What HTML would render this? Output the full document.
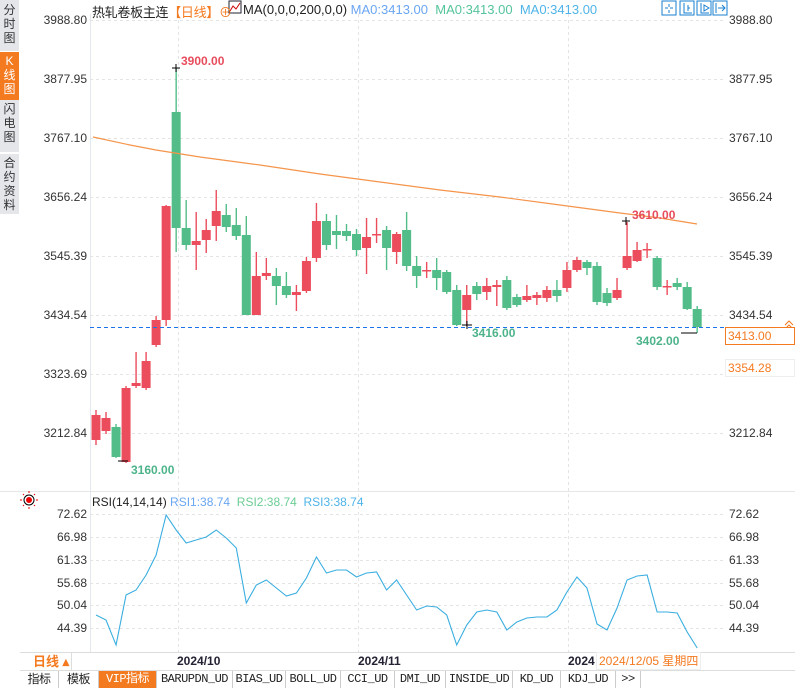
<!DOCTYPE html>
<html><head><meta charset="utf-8"><style>
body{margin:0;width:795px;height:688px;overflow:hidden;background:#fff;font-family:"Liberation Sans","Noto Sans CJK SC",sans-serif;position:relative}
.a{position:absolute;white-space:nowrap}
.side{position:absolute;left:0;width:19px;background:#e4e6ea;color:#333;font-size:12px;line-height:14px;text-align:center;border-bottom:1px solid #fff}
.lab{position:absolute;font-size:12px;color:#333;width:58px;text-align:right;left:29px}
.rl{position:absolute;left:729px;font-size:12px;color:#333}
.tab{position:absolute;top:671px;height:17px;font-size:12px;line-height:17px;text-align:center;border-right:1px solid #ccc;color:#222;font-family:"Liberation Mono","Noto Sans CJK SC",monospace;letter-spacing:-0.5px}
</style></head><body>
<div class="side" style="top:0;height:48px;padding-top:3px">分<br>时<br>图</div>
<div class="side" style="top:52px;height:46px;background:#f47a20;color:#fff;padding-top:2px">K<br>线<br>图</div>
<div class="side" style="top:100px;height:50px;padding-top:2px">闪<br>电<br>图</div>
<div class="side" style="top:154px;height:58px;padding-top:2px">合<br>约<br>资<br>料</div>

<svg class="a" style="left:0;top:0" width="795" height="688" id="s">
<line x1="90.5" y1="14" x2="90.5" y2="652" stroke="#e3e8ee"/>
<g stroke="#e4e4e4" stroke-dasharray="3,3">
<line x1="90" y1="20.5" x2="724" y2="20.5"/><line x1="90" y1="79.5" x2="724" y2="79.5"/><line x1="90" y1="138.5" x2="724" y2="138.5"/><line x1="90" y1="197.5" x2="724" y2="197.5"/><line x1="90" y1="256.5" x2="724" y2="256.5"/><line x1="90" y1="315.5" x2="724" y2="315.5"/><line x1="90" y1="374.5" x2="724" y2="374.5"/><line x1="90" y1="433.5" x2="724" y2="433.5"/>
<line x1="178.5" y1="14" x2="178.5" y2="652"/><line x1="358.5" y1="14" x2="358.5" y2="652"/><line x1="568.5" y1="14" x2="568.5" y2="652"/>
<line x1="90" y1="514.5" x2="724" y2="514.5"/><line x1="90" y1="537.5" x2="724" y2="537.5"/><line x1="90" y1="560.5" x2="724" y2="560.5"/><line x1="90" y1="583.5" x2="724" y2="583.5"/><line x1="90" y1="605.5" x2="724" y2="605.5"/><line x1="90" y1="628.5" x2="724" y2="628.5"/>
</g>
<line x1="0" y1="491.5" x2="795" y2="491.5" stroke="#e6e6e6"/>
<line x1="20" y1="652.5" x2="795" y2="652.5" stroke="#ddd"/>
<line x1="20" y1="670.5" x2="795" y2="670.5" stroke="#ddd"/>
<g id="c"></g>
<polyline fill="none" stroke="#f5944a" stroke-width="1.2" points="93,137 130,145 156,150 200,157 260,165 320,174 380,182 440,190 500,197 560,205 620,213 660,218 697,224"/>
<line x1="90" y1="327.5" x2="724" y2="327.5" stroke="#1a73e8" stroke-dasharray="4,3"/>
<polyline id="r" fill="none" stroke="#3aaee0" stroke-width="1.1"/>
<path d="M172 68h8M176 64v8M622 221h8M626 217v8M118 461h10M462 325h10M467 321v8M681 333h16" stroke="#000"/>
<path d="M785 325l4-4 4 4M785 329l4-4 4 4" stroke="#f47a20" fill="none"/>
<g fill="none" stroke="#1a7fd0">
<rect x="662" y="1" width="14" height="14"/><rect x="680" y="1" width="14" height="14"/><rect x="697" y="1" width="14" height="14"/><rect x="713" y="1" width="14" height="14"/>
<path d="M669 4v3M669 10v3M665 8h3M670 8h3M684 3v10h8M688 5v6M690 8h-2M701 3v10h8M704 5l5 3-5 3zM716 3v10M718 8h7M722 5l3 3-3 3"/>
</g>
<circle cx="29" cy="500" r="3" fill="#e00"/><circle cx="29" cy="500" r="5" fill="none" stroke="#000" stroke-width="1"/>
<path d="M22 500h-2M36 500h2M29 493v-2M29 507v2M24 495l-1-1M34 495l1-1M24 505l-1 1M34 505l1 1" stroke="#e00"/>
<rect x="229" y="1" width="12" height="12" fill="#fff" stroke="#223"/><path d="M230 11l3-5 3 3 4-6" stroke="#c00" fill="none"/>
</svg>

<div class="a" style="left:92px;top:2px;font-size:13px;color:#222;letter-spacing:-0.3px">热轧卷板主连<span style="color:#f47a20">【日线】⊕</span></div>
<div class="a" style="left:243px;top:2px;font-size:13px;color:#222">MA(0,0,0,200,0,0) <span style="color:#6aa6f2">MA0:3413.00</span> <span style="color:#54c49a">&nbsp;MA0:3413.00</span> <span style="color:#4fb4e8">&nbsp;MA0:3413.00</span></div>

<div class="lab" style="top:13px">3988.80</div><div class="lab" style="top:72px">3877.95</div><div class="lab" style="top:131px">3767.10</div><div class="lab" style="top:190px">3656.24</div><div class="lab" style="top:249px">3545.39</div><div class="lab" style="top:308px">3434.54</div><div class="lab" style="top:367px">3323.69</div><div class="lab" style="top:426px">3212.84</div>
<div class="rl" style="top:13px">3988.80</div><div class="rl" style="top:72px">3877.95</div><div class="rl" style="top:131px">3767.10</div><div class="rl" style="top:190px">3656.24</div><div class="rl" style="top:249px">3545.39</div><div class="rl" style="top:308px">3434.54</div><div class="rl" style="top:426px">3212.84</div>
<div class="a" style="left:725px;top:327px;width:66px;height:16px;border:1px solid #f47a20;color:#f47a20;font-size:12px;line-height:16px;padding-left:2px;background:#fff">3413.00</div>
<div class="a" style="left:725px;top:359px;width:66px;height:16px;border:1px solid #eee;color:#f47a20;font-size:12px;line-height:16px;padding-left:2px;background:#fff">3354.28</div>

<div class="a" style="left:181px;top:54px;font-size:12px;color:#e84c5c;font-weight:bold">3900.00</div>
<div class="a" style="left:632px;top:208px;font-size:12px;color:#e84c5c;font-weight:bold">3610.00</div>
<div class="a" style="left:472px;top:326px;font-size:12px;color:#4cb38a;font-weight:bold">3416.00</div>
<div class="a" style="left:636px;top:334px;font-size:12px;color:#4cb38a;font-weight:bold">3402.00</div>
<div class="a" style="left:131px;top:463px;font-size:12px;color:#4cb38a;font-weight:bold">3160.00</div>

<div class="a" style="left:92px;top:495px;font-size:12px;color:#222">RSI(14,14,14) <span style="color:#6aa6f2">RSI1:38.74</span> <span style="color:#6ccc94">&nbsp;RSI2:38.74</span> <span style="color:#4fb4e8">&nbsp;RSI3:38.74</span></div>
<div class="lab" style="top:507px">72.62</div><div class="lab" style="top:530px">66.98</div><div class="lab" style="top:553px">61.33</div><div class="lab" style="top:576px">55.68</div><div class="lab" style="top:598px">50.04</div><div class="lab" style="top:621px">44.39</div>
<div class="rl" style="top:507px">72.62</div><div class="rl" style="top:530px">66.98</div><div class="rl" style="top:553px">61.33</div><div class="rl" style="top:576px">55.68</div><div class="rl" style="top:598px">50.04</div><div class="rl" style="top:621px">44.39</div>

<div class="a" style="left:20px;top:653px;width:38px;height:17px;padding-left:13px;border-right:1px solid #ddd;font-size:13px;color:#f47a20;font-weight:bold;line-height:18px">日线 ▴</div>
<div class="a" style="left:177px;top:654px;font-size:12px;font-weight:bold;color:#223">2024/10</div>
<div class="a" style="left:358px;top:654px;font-size:12px;font-weight:bold;color:#223">2024/11</div>
<div class="a" style="left:568px;top:654px;font-size:12px;font-weight:bold;color:#223">2024</div>
<div class="a" style="left:596px;top:652px;font-size:12px;color:#f47a20;background:#fff;border:1px solid #eee;padding:0 2px;line-height:16px">2024/12/05 星期四</div>

<div class="tab" style="left:20px;width:38px;font-family:'Liberation Sans','Noto Sans CJK SC',sans-serif">指标</div>
<div class="tab" style="left:59px;width:39px;font-family:'Liberation Sans','Noto Sans CJK SC',sans-serif">模板</div>
<div class="tab" style="left:99px;width:57px;background:#f47a20;color:#fff">VIP指标</div>
<div class="tab" style="left:157px;width:75px">BARUPDN_UD</div>
<div class="tab" style="left:233px;width:52px">BIAS_UD</div>
<div class="tab" style="left:286px;width:54px">BOLL_UD</div>
<div class="tab" style="left:341px;width:53px">CCI_UD</div>
<div class="tab" style="left:395px;width:50px">DMI_UD</div>
<div class="tab" style="left:446px;width:66px">INSIDE_UD</div>
<div class="tab" style="left:513px;width:47px">KD_UD</div>
<div class="tab" style="left:561px;width:54px">KDJ_UD</div>
<div class="tab" style="left:616px;width:24px">&gt;&gt;</div>

<script>
var C=[[415,440,410,445,1],[418,431,412,434,1],[427,457,424,458,0],[388,462,386,463,1],[383,386,352,388,1],[361,388,352,390,1],[320,345,316,347,1],[206,320,205,326,1],[112,228,68,252,0],[228,245,200,250,0],[241,245,212,270,1],[230,240,219,253,1],[211,226,190,241,1],[215,227,204,232,0],[225,236,208,240,0],[235,315,216,315,0],[276,315,252,315,1],[273,276,258,280,1],[276,286,268,305,0],[286,295,272,298,0],[292,295,285,311,1],[261,291,257,293,1],[221,258,203,262,1],[221,245,214,250,0],[231,235,215,249,0],[231,236,224,241,0],[234,250,229,256,0],[237,248,218,274,1],[234,235,218,243,1],[230,248,226,270,0],[234,252,232,264,1],[230,266,212,271,0],[266,276,256,288,0],[270,271,262,278,1],[270,278,258,290,0],[272,292,270,294,0],[290,325,285,326,0],[295,310,285,326,1],[286,294,282,300,0],[286,292,278,300,1],[285,287,280,306,1],[280,308,276,310,0],[297,305,294,307,0],[296,300,285,302,1],[295,298,292,305,1],[290,298,286,302,1],[290,296,280,302,0],[270,288,262,292,1],[260,270,257,272,1],[262,268,260,275,0],[266,302,262,305,0],[293,303,288,306,0],[290,298,278,300,1],[256,268,222,270,1],[250,261,242,262,1],[249,250,243,258,1],[258,287,256,290,0],[286,287,280,295,1],[283,287,278,290,0],[287,309,282,310,0],[309,327,306,333,0]];
var g=document.getElementById('c'),h='';
C.forEach(function(c,i){var x=96+i*10.02,col=c[4]?'#eb4d5c':'#52bd88';
h+='<line x1="'+x+'" y1="'+c[2]+'" x2="'+x+'" y2="'+c[3]+'" stroke="'+col+'" stroke-width="1.4"/>';
h+='<rect x="'+(x-4.5)+'" y="'+c[0]+'" width="9" height="'+Math.max(1.5,c[1]-c[0])+'" fill="'+col+'"/>';});
g.innerHTML=h;
var R=[615,620,645,595,590,575,555,515,530,543,540,537,530,538,548,603,585,580,588,596,593,578,557,573,570,570,577,573,572,590,580,595,610,606,607,615,645,625,612,610,612,630,622,618,617,617,610,592,577,588,624,630,608,580,576,575,612,612,613,632,648];
document.getElementById('r').setAttribute('points',R.map(function(y,i){return (96+i*10.02)+','+y}).join(' '));
</script>
</body></html>
